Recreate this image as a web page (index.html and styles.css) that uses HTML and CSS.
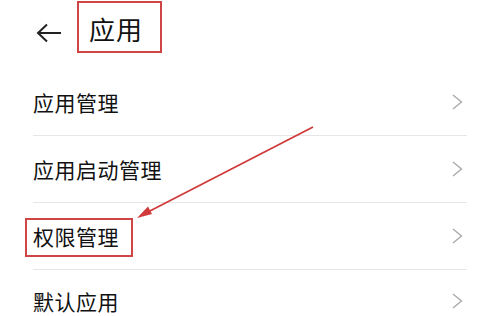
FILE: index.html
```html
<!DOCTYPE html>
<html lang="zh">
<head>
<meta charset="utf-8">
<link rel="stylesheet" href="styles.css">
</head>
<body>
<div class="page">
  <header class="header">
    <svg class="back" width="26" height="20" viewBox="0 0 26 20"><path d="M11 1.5 L2 10 L11 18.5 M2 10 H25" fill="none" stroke="#222" stroke-width="2"/></svg>
    <h1 class="title">应用</h1>
  </header>
  <ul class="list">
    <li class="row"><span class="label">应用管理</span><svg class="chev" width="11" height="16" viewBox="0 0 11 16"><path d="M1 1 L9.5 8 L1 15" fill="none" stroke="#a9a9a9" stroke-width="1.4"/></svg></li>
    <li class="row"><span class="label">应用启动管理</span><svg class="chev" width="11" height="16" viewBox="0 0 11 16"><path d="M1 1 L9.5 8 L1 15" fill="none" stroke="#a9a9a9" stroke-width="1.4"/></svg></li>
    <li class="row"><span class="label marked">权限管理</span><svg class="chev" width="11" height="16" viewBox="0 0 11 16"><path d="M1 1 L9.5 8 L1 15" fill="none" stroke="#a9a9a9" stroke-width="1.4"/></svg></li>
    <li class="row"><span class="label">默认应用</span><svg class="chev" width="11" height="16" viewBox="0 0 11 16"><path d="M1 1 L9.5 8 L1 15" fill="none" stroke="#a9a9a9" stroke-width="1.4"/></svg></li>
  </ul>
  <svg class="pointer" width="488" height="316" viewBox="0 0 488 316">
    <line x1="313" y1="127" x2="146" y2="213" stroke="#d03a3a" stroke-width="1.8"/>
    <path d="M137 218 L148 206.5 L152 214 Z" fill="#d03a3a"/>
  </svg>
</div>
</body>
</html>
```

FILE: styles.css
```css
html, body {
  margin: 0;
  padding: 0;
  background: #fff;
}
.page {
  position: relative;
  width: 488px;
  height: 316px;
  overflow: hidden;
  font-family: "Noto Sans CJK SC", "Noto Sans", sans-serif;
  color: #111;
}
.header {
  display: flex;
  align-items: center;
  height: 56px;
  padding-left: 36px;
  margin-bottom: 13px;
}
.back {
  margin-top: 10px;
  flex: none;
}
.title {
  margin: 1px 0 0 15px;
  align-self: flex-start;
  box-sizing: border-box;
  width: 85px;
  height: 52px;
  border: 2px solid #cf4546;
  font-size: 26px;
  font-weight: 400;
  line-height: 51px;
  padding-left: 10px;
  letter-spacing: 1px;
}
.list {
  list-style: none;
  margin: 0;
  padding: 0 21px 0 33px;
}
.row {
  display: flex;
  align-items: center;
  justify-content: space-between;
  height: 66px;
  border-bottom: 1px solid #e6e6e6;
}
.row:last-child {
  border-bottom: none;
  align-items: flex-start;
  padding-top: 17px;
  box-sizing: border-box;
}
.label {
  font-size: 21px;
  letter-spacing: 0.5px;
  line-height: 28px;
}
.marked {
  position: relative;
}
.marked::after {
  content: "";
  position: absolute;
  left: -8px;
  right: -14px;
  top: -4px;
  bottom: -7px;
  border: 2px solid #cf4546;
  pointer-events: none;
}
.chev {
  margin-right: 4px;
}
.row:last-child .chev {
  margin-top: 6px;
}
.pointer {
  position: absolute;
  left: 0;
  top: 0;
  pointer-events: none;
}
```
